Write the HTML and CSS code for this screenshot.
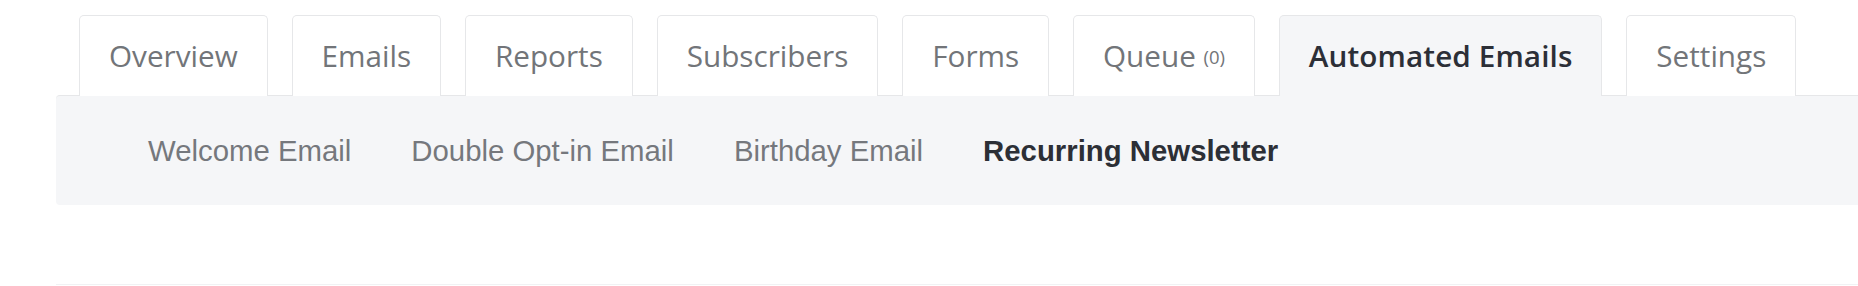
FILE: index.html
```html
<!DOCTYPE html>
<html>
<head>
<meta charset="utf-8">
<link rel="stylesheet" href="styles.css">
</head>
<body>
<div class="wrap">
  <nav class="tabs">
    <a class="tab">Overview</a>
    <a class="tab">Emails</a>
    <a class="tab">Reports</a>
    <a class="tab">Subscribers</a>
    <a class="tab">Forms</a>
    <a class="tab">Queue <span class="count">(0)</span></a>
    <a class="tab active">Automated Emails</a>
    <a class="tab">Settings</a>
  </nav>
  <div class="subnav">
    <a class="sub">Welcome Email</a>
    <a class="sub">Double Opt-in Email</a>
    <a class="sub">Birthday Email</a>
    <a class="sub active">Recurring Newsletter</a>
  </div>
  <div class="content"></div>
</div>
</body>
</html>
```
FILE: styles.css
```css
html, body {
  margin: 0;
  padding: 0;
  background: #ffffff;
}
.wrap {
  margin-left: 56px;
  padding-top: 15px;
}
.tabs {
  display: flex;
  gap: 23.8px;
  padding-left: 23px;
  margin-bottom: -1px;
}
.tab {
  position: relative;
  box-sizing: border-box;
  height: 81px;
  padding: 0 29px;
  border: 1px solid #e6e7e9;
  border-bottom: none;
  border-radius: 5px 5px 0 0;
  background: #ffffff;
  font-family: "Open Sans", sans-serif;
  font-size: 29.7px;
  line-height: 79px;
  color: #727579;
  white-space: nowrap;
}
.tab .count {
  font-size: 18.5px;
  vertical-align: 3px;
}
.tab.active {
  z-index: 1;
  background: #f5f6f8;
  color: #2c2f37;
  font-weight: 600;
  letter-spacing: 0.1px;
}
.subnav {
  display: flex;
  gap: 60px;
  padding: 1px 0 0 92px;
  height: 108px;
  box-sizing: content-box;
  border-top: 1px solid #e6e7e9;
  border-radius: 4px 0 0 4px;
  background: #f5f6f8;
  font-family: "Liberation Sans", Arial, sans-serif;
  font-size: 29.35px;
  line-height: 107px;
  color: #75787d;
}
.sub {
  white-space: nowrap;
}
.sub.active {
  font-weight: bold;
  color: #2c2f36;
}
.content {
  height: 79px;
  border-bottom: 1px solid #f1f2f4;
}
```
